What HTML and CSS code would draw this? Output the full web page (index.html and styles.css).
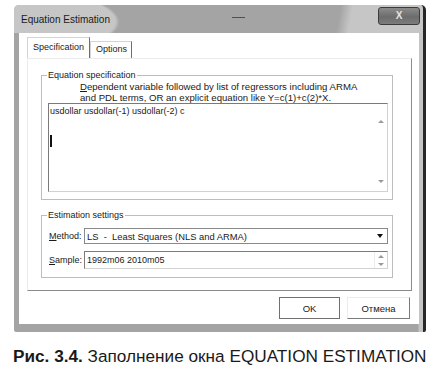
FILE: index.html
```html
<!DOCTYPE html>
<html lang="ru">
  <head>
    <meta charset="UTF-8">
    <meta name="viewport" content="width=device-width, initial-scale=1.0">
    <title>Equation Estimation</title>
    <link rel="stylesheet" href="styles.css">
  </head>
  <body>
    <div class="window">
      <div class="titlebar">
        <span class="title">Equation Estimation</span>
        <span class="title-mark"></span>
        <span class="close">X</span>
      </div>
      <div class="client">
        <div class="tabs">
          <span class="tab tab-active">Specification</span>
          <span class="tab">Options</span>
        </div>
        <div class="tab-panel">
          <fieldset class="group">
            <legend>Equation specification</legend>
            <p class="hint"><u>D</u>ependent variable followed by list of regressors including ARMA<br>and PDL terms, OR an explicit equation like Y=c(1)+c(2)*X.</p>
            <div class="memo">
              <div class="memo-text">usdollar usdollar(-1) usdollar(-2) c<span class="caret"></span></div>
              <div class="memo-scroll">
                <span class="arrow-up"></span>
                <span class="arrow-down"></span>
              </div>
            </div>
          </fieldset>
          <fieldset class="group group-est">
            <legend>Estimation settings</legend>
            <div class="field-row">
              <label><u>M</u>ethod:</label>
              <div class="combo">
                <span class="combo-text">LS  -  Least Squares (NLS and ARMA)</span>
                <span class="combo-btn"></span>
              </div>
            </div>
            <div class="field-row">
              <label><u>S</u>ample:</label>
              <div class="spin">
                <span class="spin-text">1992m06 2010m05</span>
                <span class="spin-btns">
                  <span class="arrow-up"></span>
                  <span class="arrow-down"></span>
                </span>
              </div>
            </div>
          </fieldset>
        </div>
        <div class="buttons">
          <button class="btn btn-ok">OK</button>
          <button class="btn btn-cancel">Отмена</button>
        </div>
      </div>
    </div>
    <p class="caption"><b>Рис. 3.4.</b> Заполнение окна EQUATION ESTIMATION</p>
  </body>
</html>
```

FILE: styles.css
```css
*, *::before, *::after {
    box-sizing: border-box;
}
body {
    margin: 0;
    background: #fff;
    font-family: "Liberation Sans", Arial, sans-serif;
    color: #1a1a1a;
}

/* window frame */
.window {
    width: 412px;
    height: 327px;
    margin: 5px 0 0 14px;
    background: linear-gradient(to right, #a4a4a4 0, #a4a4a4 404px, #c4c4c4 405px);
    border-right: 3px solid #262626;
    border-radius: 5px 5px 2px 2px;
    display: flex;
    flex-direction: column;
}
.titlebar {
    height: 28px;
    display: flex;
    align-items: flex-start;
    padding-left: 7px;
    border-radius: 5px 5px 0 0;
    background:
        radial-gradient(ellipse 110px 34px at 0 60%, #c6c6c6 92%, rgba(198,198,198,0) 96%),
        linear-gradient(100deg, #a4a4a4 0, #a4a4a4 322px, #c6c6c6 334px);
}
.title {
    margin-top: 9px;
    font-size: 10px;
    line-height: 12px;
}
.title-mark {
    width: 13px;
    height: 1px;
    margin: 12px 0 0 122px;
    background: #505050;
}
.close {
    margin: 2px 3px 0 auto;
    width: 42px;
    height: 18px;
    border: 1px solid #3c3c3c;
    border-radius: 3px;
    background: linear-gradient(#8c8c8c, #6c6c6c 55%, #7c7c7c);
    color: #e4e4e4;
    font-size: 10px;
    font-weight: bold;
    line-height: 16px;
    text-align: center;
}
.client {
    flex: 1;
    margin: 0 4px 8px 5px;
    padding: 4px 7px 0 8px;
    background: #fff;
    display: flex;
    flex-direction: column;
}

/* tabs */
.tabs {
    display: flex;
    align-items: flex-end;
    height: 21px;
}
.tab {
    height: 17px;
    padding: 0 4px 0 5px;
    border-top: 1px solid #d4d4d4;
    border-left: 1px solid #d4d4d4;
    border-right: 1px solid #6e6e6e;
    font-size: 9px;
    line-height: 15px;
}
.tab-active {
    height: 21px;
    padding: 2px 5px 0 5px;
}
.tab-panel {
    height: 233px;
    border: 1px solid;
    border-color: #ececec #8c8c8c #8c8c8c #ececec;
    padding: 11px 18px 0 13px;
}

/* group boxes */
.group {
    margin: 0;
    border: 1px solid #bdbdbd;
    padding: 0 4px 7px 6px;
}
.group legend {
    padding: 0 1px;
    margin-left: -1px;
    font-size: 9px;
    line-height: 11px;
}
.group-est {
    margin-top: 10px;
    padding-bottom: 8px;
}
.hint {
    margin: 0;
    padding-left: 32px;
    font-size: 9.6px;
    line-height: 11px;
}
.memo {
    display: flex;
    height: 89px;
    border: 1px solid;
    border-color: #7a7a7a #d2d2d2 #d2d2d2 #7a7a7a;
}
.memo-text {
    flex: 1;
    padding: 2px 0 0 1px;
    font-size: 9px;
    line-height: 11px;
}
.caret {
    display: block;
    width: 2px;
    height: 12px;
    margin-top: 18px;
    background: #111;
}
.memo-scroll {
    width: 12px;
    display: flex;
    flex-direction: column;
    justify-content: space-between;
    align-items: center;
    padding: 16px 0 8px;
}
.arrow-up, .arrow-down {
    width: 0;
    height: 0;
    border-left: 3px solid transparent;
    border-right: 3px solid transparent;
}
.arrow-up {
    border-bottom: 3px solid #9a9a9a;
}
.arrow-down {
    border-top: 3px solid #9a9a9a;
}

/* estimation rows */
.field-row {
    display: flex;
    align-items: center;
    margin-top: 7px;
    font-size: 9px;
}
.field-row label {
    width: 36px;
    padding-left: 1px;
}
.combo {
    flex: 1;
    height: 16px;
    display: flex;
    align-items: center;
    padding-left: 2px;
    border: 1px solid #8a8a8a;
}
.combo-text {
    white-space: pre;
    font-size: 9.4px;
}
.combo-btn {
    margin-left: auto;
    width: 14px;
    height: 100%;
    display: flex;
    align-items: center;
    justify-content: center;
}
.combo-btn::after {
    content: "";
    border-left: 3.5px solid transparent;
    border-right: 3.5px solid transparent;
    border-top: 4px solid #111;
}
.spin {
    flex: 1;
    height: 18px;
    display: flex;
    align-items: center;
    padding-left: 2px;
    border: 1px solid;
    border-color: #7a7a7a #d2d2d2 #d2d2d2 #7a7a7a;
}
.spin-btns {
    margin-left: auto;
    width: 13px;
    height: 100%;
    display: flex;
    flex-direction: column;
    justify-content: space-around;
    align-items: center;
    border-left: 1px solid #ececec;
}

/* dialog buttons */
.buttons {
    display: flex;
    justify-content: flex-end;
    gap: 7px;
    margin-top: 6px;
    padding-right: 2px;
}
.btn {
    height: 22px;
    padding: 0;
    background: #fff;
    color: #1a1a1a;
    font-family: "Liberation Sans", Arial, sans-serif;
    font-size: 9.5px;
}
.btn-ok {
    width: 61px;
    border: 1px solid #707070;
}
.btn-cancel {
    width: 63px;
    border: 1px solid;
    border-color: #ececec #7a7a7a #7a7a7a #ececec;
}

.caption {
    margin: 15px 0 0 13px;
    font-size: 17.2px;
    line-height: 18px;
    color: #1a1a1a;
}
```
